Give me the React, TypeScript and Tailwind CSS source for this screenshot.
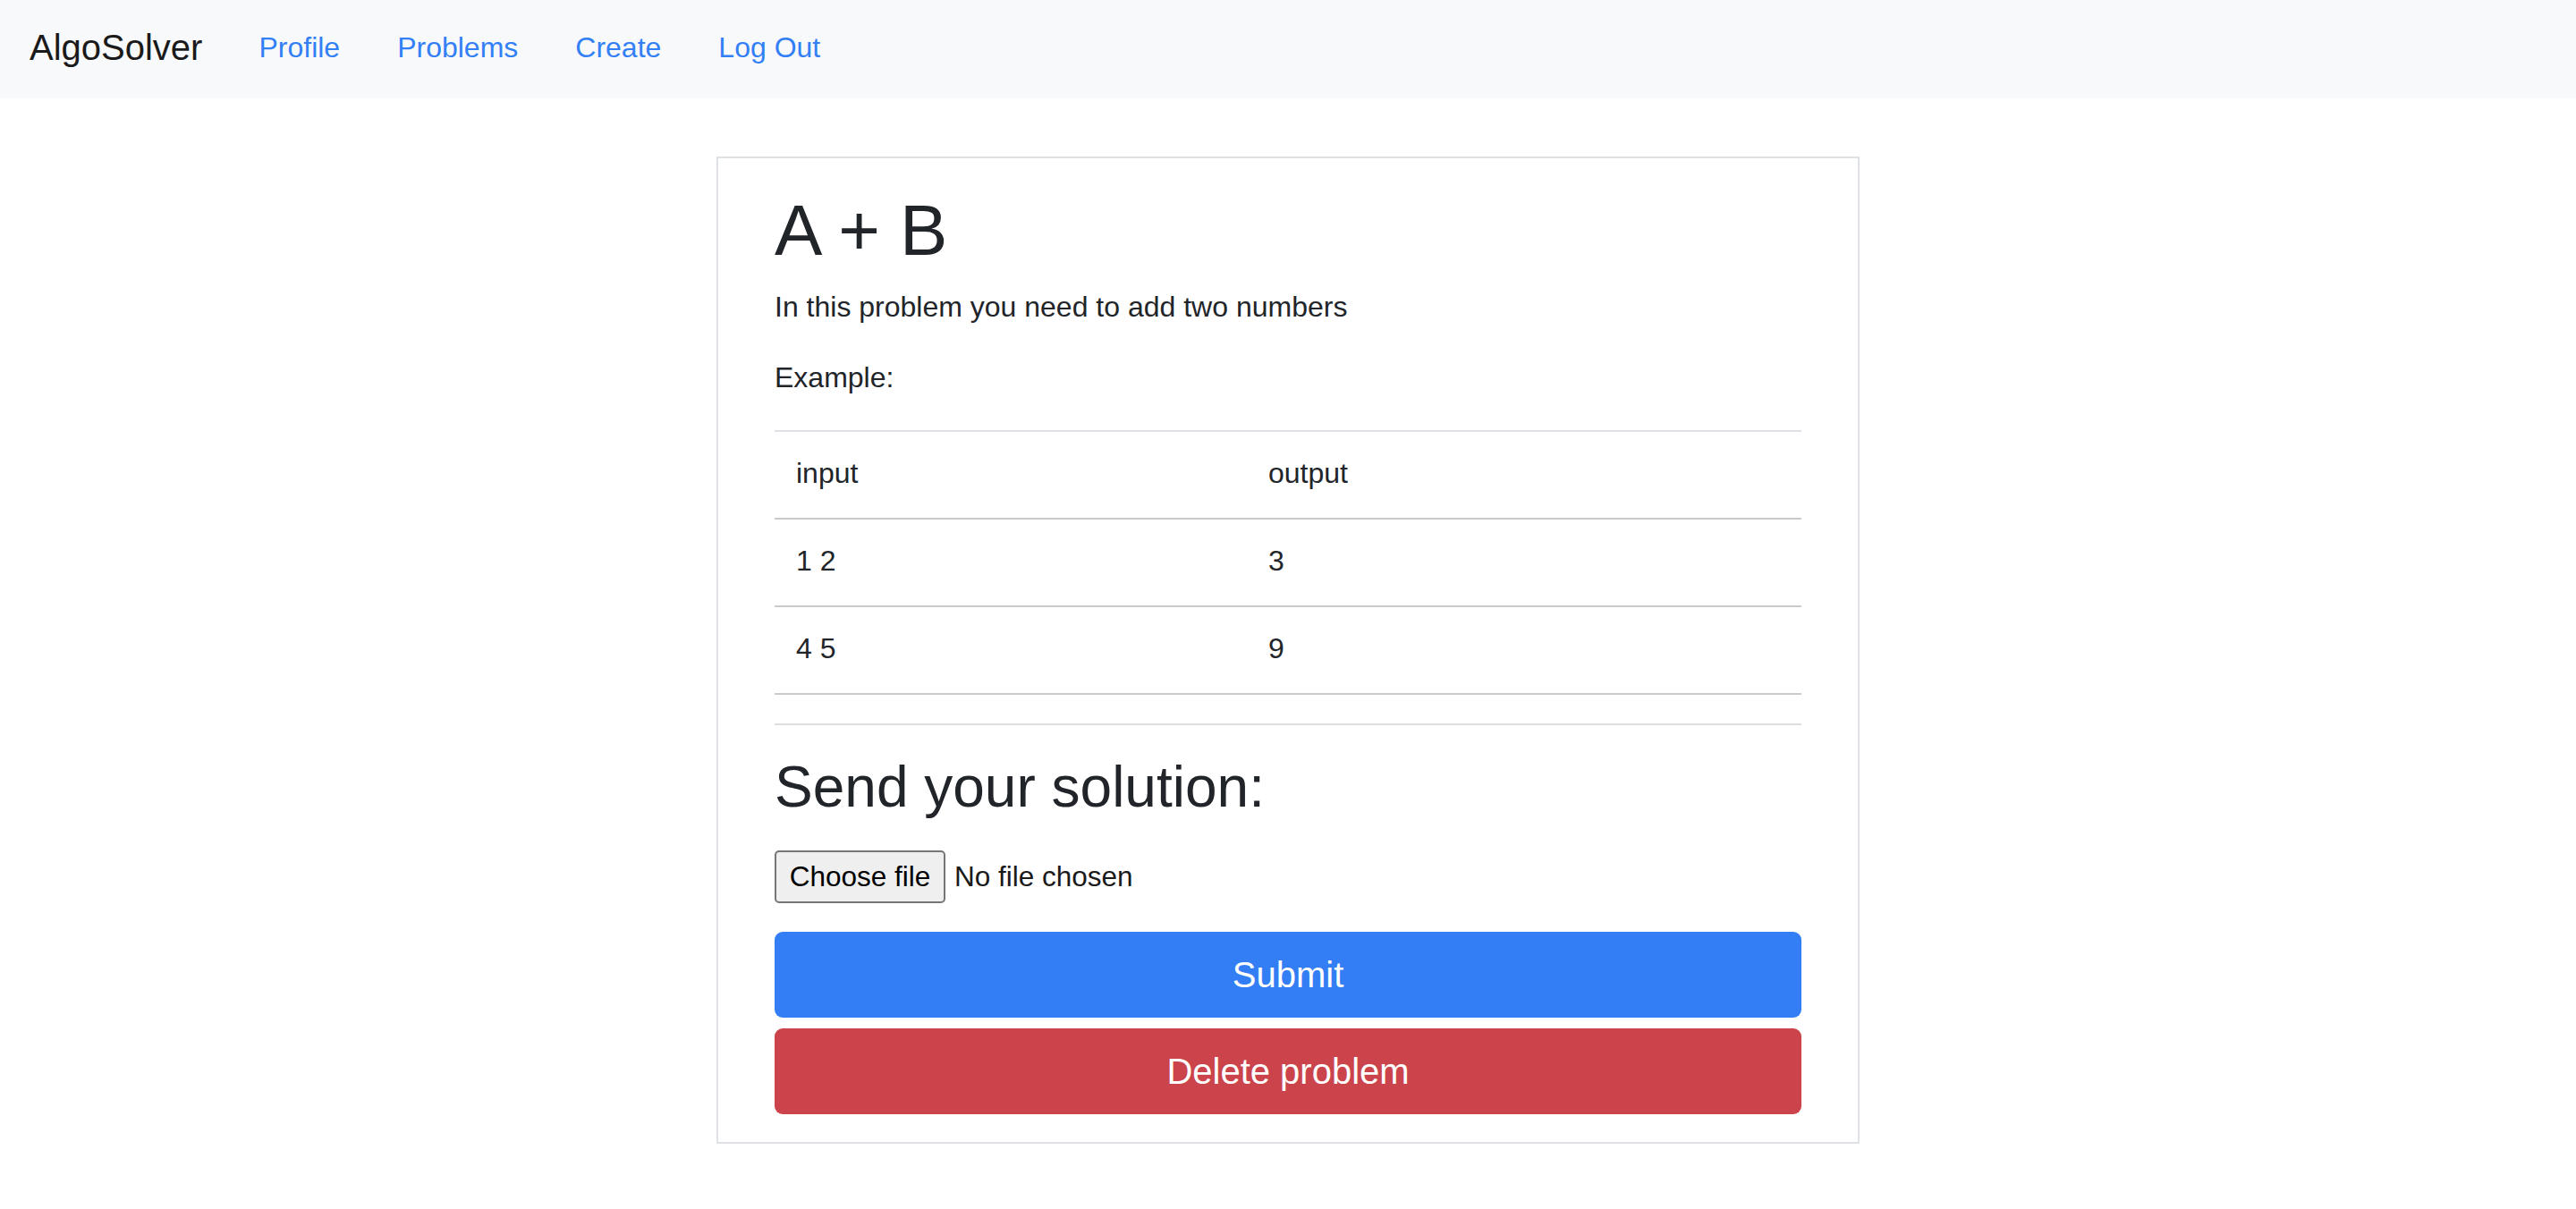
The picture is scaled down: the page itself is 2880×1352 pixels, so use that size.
import React from "react";

const rows = [
	{ input: "1 2", output: "3" },
	{ input: "4 5", output: "9" },
];

const navLinks = ["Profile", "Problems", "Create", "Log Out"];

// Top navigation bar
const Navbar: React.FC = () => {
	return (
		<nav className="flex items-center h-[110px] pb-[4px] pl-[33px] bg-[#f8f9fa]">
			<a className="text-[40px] leading-[59px] text-[#1a1a1a] mr-[63px]">
				AlgoSolver
			</a>
			<div className="flex items-center gap-[64px]">
				{navLinks.map((link) => (
					<a
						key={link}
						className="text-[32px] leading-[47px] text-[#3380f6]">
						{link}
					</a>
				))}
			</div>
		</nav>
	);
};

// Example table: input / output
const ExampleTable: React.FC = () => {
	return (
		<div className="border-t-2 border-[#dee2e6]">
			<div className="grid grid-cols-[528px_1fr] border-b-2 border-[#c9cacc] pt-[23px] pb-[26px] leading-[47px]">
				<div className="pl-[24px]">input</div>
				<div className="pl-[24px]">output</div>
			</div>
			{rows.map((row) => (
				<div
					key={row.input}
					className="grid grid-cols-[528px_1fr] border-b-2 border-[#c9cacc] pt-[23px] pb-[26px] leading-[47px]">
					<div className="pl-[24px]">{row.input}</div>
					<div className="pl-[24px]">{row.output}</div>
				</div>
			))}
		</div>
	);
};

// Fake file picker, looks like the native one
const FilePicker: React.FC = () => {
	return (
		<div className="flex items-center mt-[33px]">
			<div className="flex items-center justify-center w-[191px] h-[59px] bg-[#efefef] border-2 border-[#767676] rounded-[5px] text-black text-[31.5px]">
				Choose file
			</div>
			<span className="ml-[10px] text-[31.5px] text-[#1a1a1a]">
				No file chosen
			</span>
		</div>
	);
};

export default function App() {
	return (
		<div className="min-h-screen bg-white font-['Liberation_Sans',Arial,sans-serif] text-[#212529] text-[32px]">
			<Navbar />
			<div className="mx-auto mt-[65px] w-[1278px] border-2 border-[#dee2e6] pt-[33px] px-[63px] pb-[31px]">
				<h1 className="text-[80px] leading-[95px] font-normal mb-[15px]">
					A + B
				</h1>
				<p className="leading-[47px] mb-[32px]">
					In this problem you need to add two numbers
				</p>
				<p className="leading-[47px] mb-[35px]">Example:</p>
				<ExampleTable />
				<hr className="mt-[32px] border-0 h-[2px] bg-[#dedede]" />
				<h2 className="mt-[31px] text-[64px] leading-[76px] font-normal">
					Send your solution:
				</h2>
				<FilePicker />
				<button className="flex items-center justify-center w-full h-[96px] mt-[32px] rounded-[9px] bg-[#337ef5] text-white text-[40px]">
					Submit
				</button>
				<button className="flex items-center justify-center w-full h-[96px] mt-[12px] rounded-[9px] bg-[#cb444c] text-white text-[40px]">
					Delete problem
				</button>
			</div>
		</div>
	);
}
